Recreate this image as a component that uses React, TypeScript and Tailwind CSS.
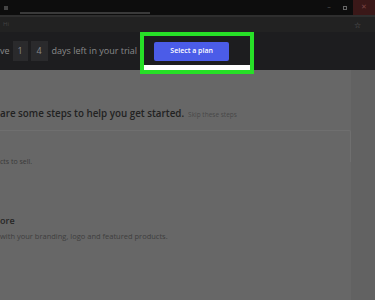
export default function App() {
  return (
    <div className="w-[375px] h-[300px] overflow-hidden bg-[#676767] font-['Open_Sans',sans-serif] flex flex-col">
      {/* window chrome */}
      <div className="h-[15px] bg-[#0d0d0d] flex items-center">
        <div className="ml-[4px] w-[4px] h-[4px] bg-[#444]" />
        <div className="ml-[12px] mt-[10px] h-[2px] w-[130px] bg-[#3a3a3a]" />
        <div className="ml-auto flex h-full">
          <div className="w-[16px] flex items-center justify-center text-[#555] text-[7px]">–</div>
          <div className="w-[16px] flex items-center justify-center">
            <div className="w-[4px] h-[4px] border border-[#666]" />
          </div>
          <div className="w-[22px] bg-[#3a1818] flex items-center justify-center text-[#7a4444] text-[7px]">✕</div>
        </div>
      </div>
      <div className="h-[2px] bg-[#2e2e2e]" />
      <div className="h-[15px] bg-[#222222] flex items-center px-[3px]">
        <span className="text-[6px] text-[#444]">Hi</span>
        <span className="ml-auto mr-[11px] text-[8px] text-[#666]">☆</span>
      </div>

      {/* trial bar */}
      <div className="h-[38px] bg-[#1d1d1f] flex items-center text-[9px] text-[#8a8a8a]">
        <span>ve</span>
        <span className="ml-[3px] w-[15px] h-[20px] bg-[#2a2a2c] flex items-center justify-center">1</span>
        <span className="ml-[3px] w-[17px] h-[20px] bg-[#2a2a2c] flex items-center justify-center">4</span>
        <span className="ml-[4px]">days left in your trial</span>
        <div className="ml-[3px] w-[114px] h-[42px] mt-[4px] border-[4px] border-[#27e027] flex flex-col">
          <div className="flex-1 bg-[#1d1d1f] flex items-start pl-[10px] pt-[6px]">
            <div className="w-[75px] h-[19px] bg-[#4b5ce8] rounded-[2px] flex items-center justify-center text-[7px] font-semibold text-white">
              Select a plan
            </div>
          </div>
          <div className="h-[5px] bg-white" />
        </div>
      </div>

      {/* page */}
      <div className="flex-1 flex">
        <div className="w-[351px] flex flex-col pt-[37px]">
          <div className="flex items-baseline">
            <span className="text-[9.8px] font-semibold text-[#222]">are some steps to help you get started.</span>
            <span className="ml-[4px] text-[6.5px] text-[#474747]">Skip these steps</span>
          </div>
          <div className="mt-[8px] h-[32px] border-r border-t border-[#6f6f6f] rounded-tr-[2px]" />
          <span className="-mt-[5px] text-[7px] text-[#3a3a3a]">cts to sell.</span>
          <div className="mt-[47px] text-[9px] font-semibold text-[#262626]">ore</div>
          <div className="mt-[3px] text-[7.5px] text-[#3e3e3e]">with your branding, logo and featured products.</div>
        </div>
        <div className="flex-1 bg-[#626262]" />
      </div>
    </div>
  );
}
